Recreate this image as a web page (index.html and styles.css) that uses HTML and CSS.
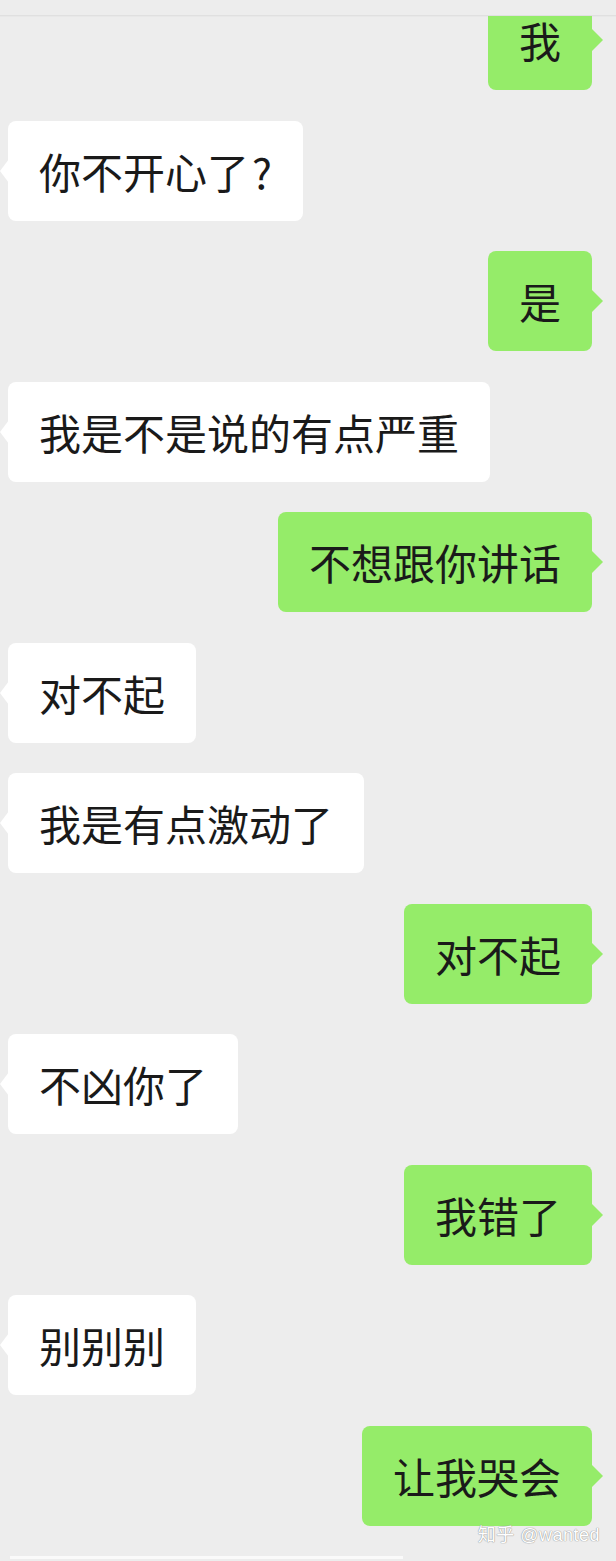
FILE: index.html
```html
<!DOCTYPE html>
<html lang="zh-CN">
<head>
<meta charset="utf-8">
<title>聊天记录</title>
<link rel="stylesheet" href="styles.css">
</head>
<body>
<div class="screen">
  <div class="topbar"></div>
  <div class="chat">
    <div class="row me first"><div class="bubble">我</div></div>
    <div class="row them"><div class="bubble">你不开心了<span class="qmark">?</span></div></div>
    <div class="row me"><div class="bubble">是</div></div>
    <div class="row them"><div class="bubble">我是不是说的有点严重</div></div>
    <div class="row me"><div class="bubble">不想跟你讲话</div></div>
    <div class="row them"><div class="bubble">对不起</div></div>
    <div class="row them"><div class="bubble">我是有点激动了</div></div>
    <div class="row me"><div class="bubble">对不起</div></div>
    <div class="row them"><div class="bubble">不凶你了</div></div>
    <div class="row me"><div class="bubble">我错了</div></div>
    <div class="row them"><div class="bubble">别别别</div></div>
    <div class="row me"><div class="bubble">让我哭会</div></div>
  </div>
  <div class="footer">
    <div class="watermark">知乎 @wanted</div>
    <div class="input-line"></div>
  </div>
</div>
</body>
</html>
```

FILE: styles.css
```css
html, body {
  margin: 0;
  padding: 0;
  background: #ededed;
}

.screen {
  width: 616px;
  height: 1561px;
  overflow: hidden;
  display: flex;
  flex-direction: column;
  font-family: "Noto Sans CJK SC", "Noto Sans", sans-serif;
}

.topbar {
  height: 15px;
  border-bottom: 1px solid #e0e0e0;
  box-shadow: 0 1px 1px rgba(0, 0, 0, 0.02);
}

.chat {
  display: flex;
  flex-direction: column;
  gap: 30.5px;
  overflow: hidden;
  padding: 0 24px 0 8px;
}

.row {
  display: flex;
}

.row.first {
  margin-top: -26px;
}

.row.me {
  justify-content: flex-end;
}

.row.them {
  justify-content: flex-start;
}

.bubble {
  position: relative;
  height: 100px;
  line-height: 100px;
  padding: 0 31px;
  border-radius: 8px;
  font-size: 42px;
  color: #1a1a1a;
  white-space: nowrap;
}

.qmark {
  margin-left: 3px;
}

.them .bubble {
  background: #ffffff;
}

.me .bubble {
  background: #95ec69;
}

/* speech tails */
.bubble::before {
  content: "";
  position: absolute;
  top: 50%;
  width: 0;
  height: 0;
  border-top: 12px solid transparent;
  border-bottom: 12px solid transparent;
  transform: translateY(-50%);
}

.them .bubble::before {
  left: -8px;
  border-right: 9px solid #ffffff;
}

.me .bubble::before {
  right: -11px;
  border-left: 12px solid #95ec69;
}

.footer {
  position: relative;
  flex: 1;
}

.watermark {
  position: absolute;
  right: 16px;
  top: -2px;
  font-family: "Liberation Sans", "Noto Sans CJK SC", sans-serif;
  font-size: 18px;
  line-height: 22px;
  color: #ffffff;
  text-shadow: 0 0 1px #8a8a8a, 0 0 1px #9a9a9a;
  letter-spacing: 0.5px;
}

.input-line {
  position: absolute;
  left: 10px;
  width: 393px;
  bottom: 2px;
  height: 3px;
  background: #fafafa;
}
```
